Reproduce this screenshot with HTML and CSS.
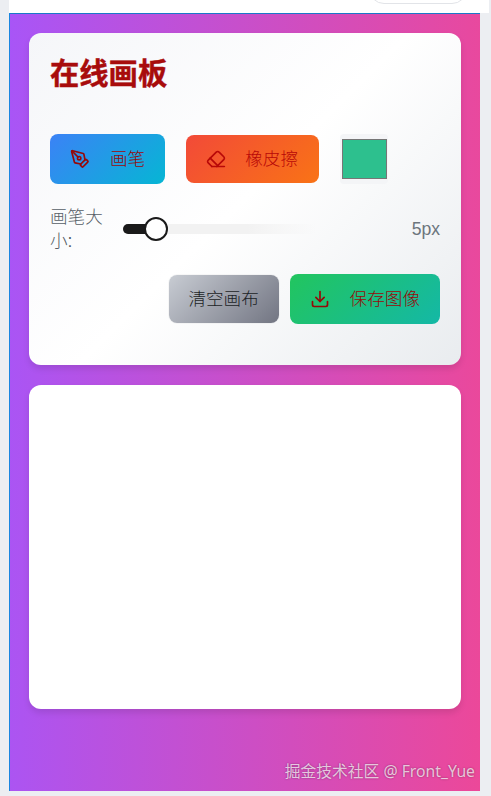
FILE: index.html
```html
<!DOCTYPE html>
<html lang="zh">
<head>
<meta charset="utf-8">
<title>在线画板</title>
<link rel="stylesheet" href="styles.css">
</head>
<body>
<div class="page">
  <div class="topbar"><div class="pill"></div></div>
  <main class="stage">
    <section class="card panel">
      <h1 class="title">在线画板</h1>
      <div class="tools">
        <button class="btn btn-tall btn-blue">
          <svg class="icon" viewBox="0 0 24 24"><path d="M15.707 21.293a1 1 0 0 1-1.414 0l-1.586-1.586a1 1 0 0 1 0-1.414l5.586-5.586a1 1 0 0 1 1.414 0l1.586 1.586a1 1 0 0 1 0 1.414z"/><path d="m18 13-1.375-6.874a1 1 0 0 0-.746-.776L3.235 2.028a1 1 0 0 0-1.207 1.207L5.35 15.879a1 1 0 0 0 .776.746L13 18"/><path d="m2.3 2.3 7.286 7.286"/><circle cx="11" cy="11" r="2"/></svg>
          <span>画笔</span>
        </button>
        <button class="btn btn-orange">
          <svg class="icon" viewBox="0 0 24 24"><path d="m7 21-4.3-4.3c-1-1-1-2.5 0-3.4l9.6-9.6c1-1 2.5-1 3.4 0l5.6 5.6c1 1 1 2.5 0 3.4L13 21"/><path d="M22 21H7"/><path d="m5 11 9 9"/></svg>
          <span>橡皮擦</span>
        </button>
        <div class="swatch"><div class="swatch-fill"></div></div>
      </div>
      <div class="size-row">
        <label class="size-label">画笔大小:</label>
        <div class="slider"><div class="slider-fill"></div><div class="slider-thumb"></div></div>
        <span class="size-value">5px</span>
      </div>
      <div class="actions">
        <button class="btn btn-gray">清空画布</button>
        <button class="btn btn-tall btn-green">
          <svg class="icon" viewBox="0 0 24 24"><path d="M21 15v4a2 2 0 0 1-2 2H5a2 2 0 0 1-2-2v-4"/><path d="m7 10 5 5 5-5"/><path d="M12 15V3"/></svg>
          <span>保存图像</span>
        </button>
      </div>
    </section>
    <section class="card canvas"></section>
    <div class="watermark">掘金技术社区 @ Front_Yue</div>
  </main>
</div>
</body>
</html>
```
FILE: styles.css
```css
* { box-sizing: border-box; }
html, body { margin: 0; height: 796px; overflow: hidden; }
body {
  background: #eceef2;
  font-family: "Liberation Sans", "Noto Sans CJK SC", sans-serif;
  font-size: 17.6px;
  font-weight: 300;
}
.page { width: 480px; margin-left: 9px; }
.topbar { height: 13px; background: #fff; position: relative; overflow: hidden; }
.pill {
  position: absolute; left: 360px; bottom: 9px; width: 98px; height: 30px;
  border: 1px solid #e2e4e8; border-radius: 15px; background: #fff;
}
.stage {
  position: relative; height: 778px; width: 471px;
  padding: 20px 19px 0 19px;
  background: linear-gradient(92deg, #a855f7, #ec4899) border-box;
  border-left: 1px solid #1a86e0;
  box-shadow: inset 0 1px 0 #1a78c8;
}
.card { border-radius: 12px; box-shadow: 0 4px 6px rgba(0,0,0,.1); }
.panel {
  height: 332px; padding: 20px 21px;
  background: linear-gradient(135deg, #f5f6f9, #fff 50%, #e9ecef);
}
.canvas { height: 324px; margin-top: 20px; background: #fff; }
.title {
  margin: 0; height: 42px; font-size: 29.3px; line-height: 42px; font-weight: 700;
  color: #a80c0c; -webkit-text-stroke: .4px #a80c0c;
}
.tools { display: flex; align-items: center; gap: 21px; margin-top: 39px; height: 50px; }
.btn {
  display: inline-flex; align-items: center; justify-content: center; gap: 20px;
  padding: 12px 20px; border: 0; border-radius: 8px; white-space: nowrap;
  font: inherit; line-height: 24px; color: #960808;
}
.btn-tall { padding: 13px 20px; }
.icon { width: 20px; height: 20px; fill: none; stroke: currentColor; stroke-width: 2; stroke-linecap: round; stroke-linejoin: round; flex: none; }
.btn-blue { background: linear-gradient(135deg, #3b82f6, #06b6d4); }
.btn-orange { background: linear-gradient(135deg, #f24a38, #f97316); color: #b80808; gap: 19px; padding-right: 21px; }
.btn-gray { width: 110px; padding-left: 0; padding-right: 0; background: linear-gradient(135deg, #c8ccd3, #727582); color: #1c1f26; box-shadow: 0 0 0 1px rgba(0,0,0,.03); }
.btn-green { background: linear-gradient(135deg, #22c55e, #14b8a6); }
.swatch {
  width: 48px; height: 50px; padding: 5px 1px 5px 2px;
  background: #f4f5f7; border-radius: 4px;
}
.swatch-fill { height: 100%; background: #2dc08e; border: 1px solid #767676; }
.size-row { display: flex; align-items: center; gap: 19px; margin-top: 20px; height: 50px; }
.size-label { width: 54px; flex: none; color: #565e66; line-height: 24px; }
.slider { position: relative; flex: 1; height: 10px; border-radius: 5px; background: linear-gradient(90deg, #f2f2f2 45%, rgba(242,242,242,0) 70%); }
.slider-fill { width: 33px; height: 10px; border-radius: 5px 0 0 5px; background: #1a1a1a; }
.slider-thumb {
  position: absolute; left: 21px; top: -7px; width: 24px; height: 24px;
  border-radius: 50%; background: #fff; border: 2px solid #1a1a1a;
}
.size-value { color: #6c757d; flex: none; margin-left: -7px; }
.actions { display: flex; justify-content: flex-end; align-items: center; gap: 11px; margin-top: 20px; height: 50px; }
.watermark {
  position: absolute; right: 5px; bottom: 9px;
  font-family: "Noto Sans", "Noto Sans CJK SC", sans-serif; font-size: 15.75px; line-height: 22px; font-weight: 400;
  color: rgba(255,255,255,.72); text-shadow: 0 0 2px rgba(0,0,0,.4);
}
```
